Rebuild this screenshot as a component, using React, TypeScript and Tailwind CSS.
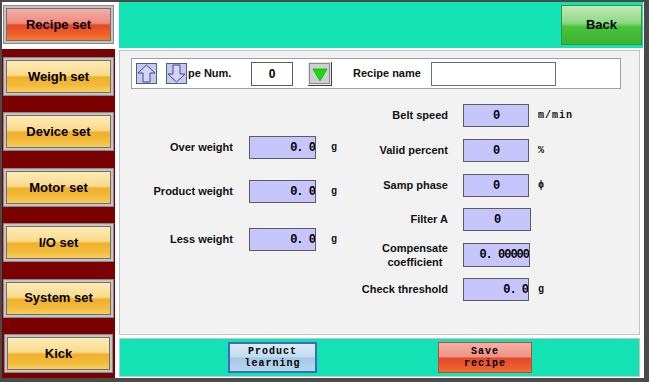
const yellow =
  "bg-[linear-gradient(to_bottom,#fdebb4_0%,#f9da8e_46%,#f0b02a_52%,#f3bb3c_80%,#f8cd5e_100%)]"
const red =
  "bg-[linear-gradient(to_bottom,#f5b0a8_0%,#ee8a7c_46%,#e2482a_52%,#ef5f28_80%,#f57a30_100%)]"

function SideButton({ label, recipe }: { label: string; recipe?: boolean }) {
  return (
    <div className="h-[39px] border border-[#8a8a8a] bg-[#c4c4c4] p-[2px]">
      <div
        className={`flex h-full items-center justify-center border border-[#707070] ${recipe ? red : yellow} font-['Liberation_Sans',Arial,sans-serif] text-[13px] font-bold text-black`}
      >
        {label}
      </div>
    </div>
  )
}

function ArrowBox({ down }: { down?: boolean }) {
  return (
    <svg width="21" height="21" viewBox="0 0 21 21">
      <rect x="0.5" y="0.5" width="20" height="20" fill="#c6c6fa" stroke="#3f6a6a" />
      <polygon
        points={down ? "10.5,19 19,11 14,11 14,2 7,2 7,11 2,11" : "10.5,2 19,10 14,10 14,19 7,19 7,10 2,10"}
        fill="#d4d4ff"
        stroke="#4a4a6a"
        strokeWidth="1"
      />
    </svg>
  )
}

function NumBox({ value, w = 66, h = 23, align = "right" }: { value: string; w?: number; h?: number; align?: "right" | "center" }) {
  return (
    <div
      style={{ width: w, height: h }}
      className={`flex items-center overflow-hidden border border-[#5c5c5c] bg-[#c6c6fc] font-['Liberation_Mono',monospace] text-[12px] font-bold tracking-[-1px] text-black ${align === "center" ? "justify-center" : "justify-end pr-0"}`}
    >
      {value}
    </div>
  )
}

const label = "font-['Liberation_Sans',Arial,sans-serif] text-[11px] font-bold text-[#111] leading-[13px]"
const unit = "font-['Liberation_Mono',monospace] text-[10px] font-bold tracking-[1px] text-[#111]"

function LeftRow({ name, value, className = "" }: { name: string; value: string; className?: string }) {
  return (
    <div className={`flex h-[23px] items-center ${className}`}>
      <div className={`w-[104px] text-right ${label}`}>{name}</div>
      <div className="ml-[16px]">
        <NumBox value={value} w={67} />
      </div>
      <div className={`ml-[15px] ${unit}`}>g</div>
    </div>
  )
}

function RightRow({
  name,
  value,
  u,
  w = 66,
  h = 23,
  align = "center",
  className = "",
}: {
  name: React.ReactNode
  value: string
  u?: string
  w?: number
  h?: number
  align?: "right" | "center"
  className?: string
}) {
  return (
    <div className={`flex items-center ${className}`} style={{ height: h }}>
      <div className={`flex w-[110px] justify-end ${label}`}>{name}</div>
      <div className="ml-[15px]">
        <NumBox value={value} w={w} h={h} align={align} />
      </div>
      {u && <div className={`ml-[9px] ${unit}`}>{u}</div>}
    </div>
  )
}

export default function App() {
  return (
    <div className="h-[382px] w-[649px] bg-[#4a4a4a] pb-[4px] pl-[2px] pr-[5px] pt-[2px]">
      <div className="flex h-full w-full bg-white">
        {/* sidebar */}
        <div className="flex w-[113px] flex-col">
          <div className="h-[47px] px-[1px] pt-[3px]">
            <SideButton label="Recipe set" recipe />
          </div>
          <div className="flex flex-1 flex-col justify-between bg-[#7b0000] px-[1px] pb-[5px] pt-[8px]">
            <SideButton label="Weigh set" />
            <SideButton label="Device set" />
            <SideButton label="Motor set" />
            <SideButton label="I/O set" />
            <SideButton label="System set" />
            <div className="px-[1px]">
              <SideButton label="Kick" />
            </div>
          </div>
        </div>

        {/* main */}
        <div className="ml-[4px] flex flex-1 flex-col">
          <div className="mr-[1px] flex h-[46px] justify-end bg-[#12e2b4] pr-[1px] pt-[3px]">
            <div className="flex h-[40px] w-[81px] items-center justify-center border border-[#2f9a2f] bg-[linear-gradient(to_bottom,#c4e8bc_0%,#8cd880_45%,#46c238_55%,#3fb232_100%)] font-['Liberation_Sans',Arial,sans-serif] text-[13px] font-bold text-black">
              Back
            </div>
          </div>

          <div className="mt-[2px] h-[285px] w-[521px] border border-[#c4c4c4] bg-[#f2f2f2]">
            {/* recipe row */}
            <div className="ml-[11px] mt-[7px] flex h-[31px] w-[490px] items-center border border-[#a0a0a0] bg-white">
              <div className="ml-[4px]">
                <ArrowBox />
              </div>
              <div className="ml-[9px]">
                <ArrowBox down />
              </div>
              <div className={`${label} ml-[1px] w-[63px]`}>pe Num.</div>
              <div className="flex h-[24px] w-[42px] items-center justify-center border border-[#5c5c5c] bg-white font-['Liberation_Sans',Arial,sans-serif] text-[12px] font-bold">
                0
              </div>
              <svg className="ml-[15px]" width="24" height="24" viewBox="0 0 24 24">
                <rect x="0" y="0" width="24" height="24" fill="#404040" />
                <rect x="0" y="0" width="23" height="23" fill="#e8e8e8" />
                <rect x="1" y="1" width="21" height="21" fill="#8a8a8a" />
                <rect x="2" y="2" width="19" height="19" fill="#cfcfcf" />
                <polygon points="5,7 19,7 12,19" fill="#10e010" stroke="#0a8a0a" strokeWidth="0.6" />
              </svg>
              <div className={`${label} ml-[21px] w-[78px]`}>Recipe name</div>
              <div className="h-[24px] w-[125px] border border-[#707070] bg-white" />
            </div>

            {/* fields */}
            <div className="flex">
              <div className="w-[218px] pl-[9px] pt-[47px]">
                <LeftRow name="Over weight" value="0. 0" />
                <LeftRow name="Product weight" value="0. 0" className="mt-[21px]" />
                <LeftRow name="Less weight" value="0. 0" className="mt-[25px]" />
              </div>
              <div className="pt-[15px]">
                <RightRow name="Belt speed" value="0" u="m/min" />
                <RightRow name="Valid percent" value="0" u="%" className="mt-[12px]" />
                <RightRow name="Samp phase" value="0" u="ϕ" className="mt-[12px]" />
                <RightRow name="Filter A" value="0" w={68} className="mt-[11px]" />
                <RightRow
                  name={
                    <div className="text-center leading-[14px]">
                      Compensate
                      <br />
                      coefficient
                    </div>
                  }
                  value="0. 00000"
                  w={67}
                  h={24}
                  align="right"
                  className="mt-[12px]"
                />
                <RightRow name="Check threshold" value="0. 0" u="g" align="right" className="mt-[11px]" />
              </div>
            </div>
          </div>

          <div className="mt-[3px] flex h-[39px] w-[521px] items-center border border-[#c4c4c4] bg-[#12e2b4]">
            <div className="ml-[108px] flex h-[31px] w-[89px] flex-col items-center justify-center border-2 border-[#3a6cba] bg-[linear-gradient(to_bottom,#dceaf6_0%,#c2dcf0_48%,#a6c8e6_52%,#b8d6ee_100%)] font-['Liberation_Mono',monospace] text-[10px] font-bold leading-[12px] tracking-[1px] text-black">
              <span>Product</span>
              <span>learning</span>
            </div>
            <div className="ml-[121px] flex h-[31px] w-[94px] flex-col items-center justify-center border border-[#c04a34] bg-[linear-gradient(to_bottom,#f4b0a6_0%,#ee9486_48%,#e4482c_52%,#f06a34_100%)] font-['Liberation_Mono',monospace] text-[10px] font-bold leading-[12px] tracking-[1px] text-black">
              <span>Save</span>
              <span>recipe</span>
            </div>
          </div>
        </div>
      </div>
    </div>
  )
}
